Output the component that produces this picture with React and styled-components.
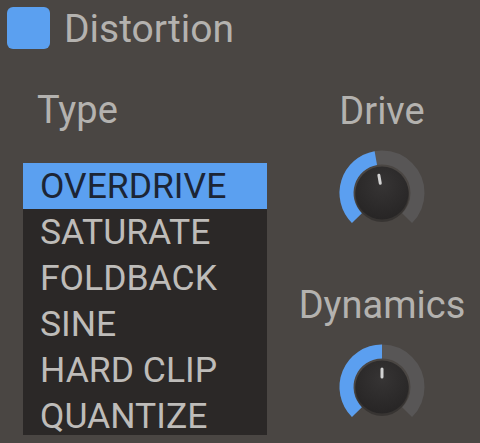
import React from 'react'
import styled, { createGlobalStyle } from 'styled-components'

const GlobalStyle = createGlobalStyle`
  body {
    margin: 0;
    background: #4a4643;
    font-family: Roboto, "Noto Sans", sans-serif;
  }
`

const TYPES = ['OVERDRIVE', 'SATURATE', 'FOLDBACK', 'SINE', 'HARD CLIP', 'QUANTIZE']

const polar = (r, deg) => {
  const rad = (deg * Math.PI) / 180
  return [45 + r * Math.sin(rad), 45 - r * Math.cos(rad)]
}

const arc = (r, a0, a1) => {
  const [x0, y0] = polar(r, a0)
  const [x1, y1] = polar(r, a1)
  const large = a1 - a0 > 180 ? 1 : 0
  return `M ${x0} ${y0} A ${r} ${r} 0 ${large} 1 ${x1} ${y1}`
}

const Knob = ({ angle, id }) => {
  const [px0, py0] = polar(10, angle)
  const [px1, py1] = polar(18, angle)
  return (
    <KnobSvg width="90" height="90" viewBox="0 0 90 90">
      <defs>
        <radialGradient id={id} cx="50%" cy="35%" r="65%">
          <stop offset="0%" stopColor="#363434" />
          <stop offset="100%" stopColor="#272525" />
        </radialGradient>
      </defs>
      <path d={arc(35.5, -135, 135)} stroke="#585656" strokeWidth="14" fill="none" />
      <path d={arc(35.5, -135, angle)} stroke="#5b9ff0" strokeWidth="14" fill="none" />
      <circle cx="45" cy="47" r="27" fill="rgba(0,0,0,0.25)" />
      <circle cx="45" cy="45" r="26.5" fill={`url(#${id})`} />
      <line x1={px0} y1={py0} x2={px1} y2={py1} stroke="#d2d2d2" strokeWidth="3" strokeLinecap="round" />
    </KnobSvg>
  )
}

const App = () => {
  const selected = 0
  return (
    <Panel>
      <GlobalStyle />
      <Header>
        <Toggle />
        <Title>Distortion</Title>
      </Header>
      <Body>
        <LeftCol>
          <Label $indent={14}>Type</Label>
          <TypeList>
            {TYPES.map((t, i) => (
              <TypeRow key={t} $active={i === selected}>{t}</TypeRow>
            ))}
          </TypeList>
        </LeftCol>
        <RightCol>
          <Label $top={1}>Drive</Label>
          <Knob angle={-10} id="kd" />
          <Label $top={48}>Dynamics</Label>
          <Knob angle={0} id="ky" />
        </RightCol>
      </Body>
    </Panel>
  )
}

export default App

const Panel = styled.div`
  width: 480px;
  height: 443px;
  overflow: hidden;
  background: #4a4643;
`

const Header = styled.div`
  display: flex;
  align-items: flex-start;
  padding: 7px 0 0 7px;
`

const Toggle = styled.div`
  width: 43px;
  height: 42px;
  border-radius: 6px;
  background: #5ba0f0;
`

const Title = styled.div`
  margin: 3px 0 0 14px;
  font-size: 39px;
  line-height: 39px;
  color: #b4b2af;
`

const Body = styled.div`
  display: grid;
  grid-template-columns: 284px 196px;
  margin-top: 42px;
`

const LeftCol = styled.div`
  display: flex;
  flex-direction: column;
  padding-left: 23px;
`

const Label = styled.div`
  font-size: 38px;
  line-height: 38px;
  color: #b4b2af;
  margin-left: ${(p) => p.$indent || 0}px;
  margin-top: ${(p) => p.$top || 0}px;
`

const TypeList = styled.div`
  margin-top: 34px;
  width: 244px;
  height: 272px;
  background: #2b2827;
`

const TypeRow = styled.div`
  box-sizing: border-box;
  height: 46px;
  padding: 4px 0 0 17px;
  line-height: 38px;
  font-size: 35.5px;
  color: ${(p) => (p.$active ? '#1c2535' : '#bebcb9')};
  background: ${(p) => (p.$active ? '#5ba0f0' : 'transparent')};
  white-space: nowrap;

  &:last-child {
    height: 42px;
  }
`

const RightCol = styled.div`
  display: flex;
  flex-direction: column;
  align-items: center;
`

const KnobSvg = styled.svg`
  display: block;
  margin-top: 18px;
`
